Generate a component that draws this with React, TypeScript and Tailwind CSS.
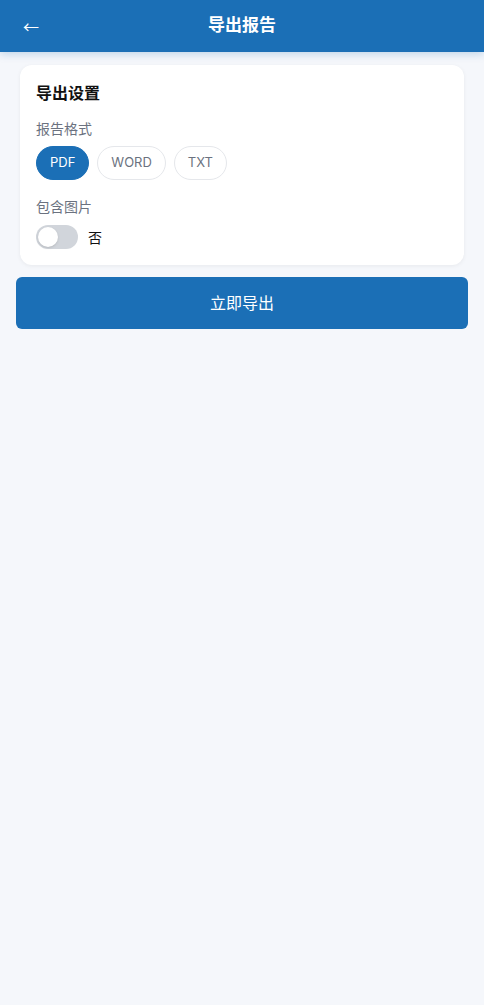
import React, { useState } from 'react';

const formats = ['PDF', 'WORD', 'TXT'];

export default function App() {
  const [format, setFormat] = useState('PDF');
  const [withImages, setWithImages] = useState(false);

  return (
    <div
      className="min-h-screen bg-[#f5f7fb] text-[#1f2329]"
      style={{ fontFamily: '"Inter", "Noto Sans CJK SC", sans-serif' }}
    >
      {/* Header */}
      <header className="relative h-[52px] bg-[#1b6fb6] flex items-center justify-center shadow-[0_2px_8px_rgba(27,111,182,0.25)]">
        <button
          className="absolute left-[23px] top-[12px] text-white text-[16px] leading-[28px] font-normal"
          style={{ fontFamily: '"Noto Sans CJK SC", sans-serif' }}
        >
          ←
        </button>
        <h1 className="text-white text-[17px] font-bold">导出报告</h1>
      </header>

      <main className="px-4 pt-[13px]">
        {/* Settings card */}
        <section className="mx-1 bg-white rounded-[12px] shadow-[0_1px_4px_rgba(0,0,0,0.06)] px-4 pt-[17px] pb-4">
          <h2 className="text-[16px] font-bold leading-[22px] text-[#111]">导出设置</h2>

          <div className="mt-[15px] text-[14px] leading-[20px] text-[#6b7280]">报告格式</div>
          <div className="mt-[7px] flex gap-2">
            {formats.map((f) =>
              f === format ? (
                <button
                  key={f}
                  onClick={() => setFormat(f)}
                  className="h-[34px] px-[13px] rounded-full bg-[#1b6fb6] text-white text-[13px] border border-[#1b6fb6]"
                >
                  {f}
                </button>
              ) : (
                <button
                  key={f}
                  onClick={() => setFormat(f)}
                  className="h-[34px] px-[13px] rounded-full bg-white text-[#6b7280] text-[13px] border border-[#e5e7eb]"
                >
                  {f}
                </button>
              )
            )}
          </div>

          <div className="mt-[17px] text-[14px] leading-[20px] text-[#6b7280]">包含图片</div>
          <div className="mt-[8px] flex items-center gap-[10px]">
            <button
              onClick={() => setWithImages(!withImages)}
              className={
                withImages
                  ? 'relative w-[42px] h-[24px] rounded-full bg-[#1b6fb6]'
                  : 'relative w-[42px] h-[24px] rounded-full bg-[#d1d5db]'
              }
            >
              <span
                className={
                  withImages
                    ? 'absolute top-[2px] left-[20px] w-[20px] h-[20px] rounded-full bg-white shadow'
                    : 'absolute top-[2px] left-[2px] w-[20px] h-[20px] rounded-full bg-white shadow'
                }
              />
            </button>
            <span className="text-[14px] text-[#111]">{withImages ? '是' : '否'}</span>
          </div>
        </section>

        {/* Export button */}
        <button className="mt-3 w-full h-[52px] rounded-[6px] bg-[#1b6fb6] text-white text-[16px]">
          立即导出
        </button>
      </main>
    </div>
  );
}
